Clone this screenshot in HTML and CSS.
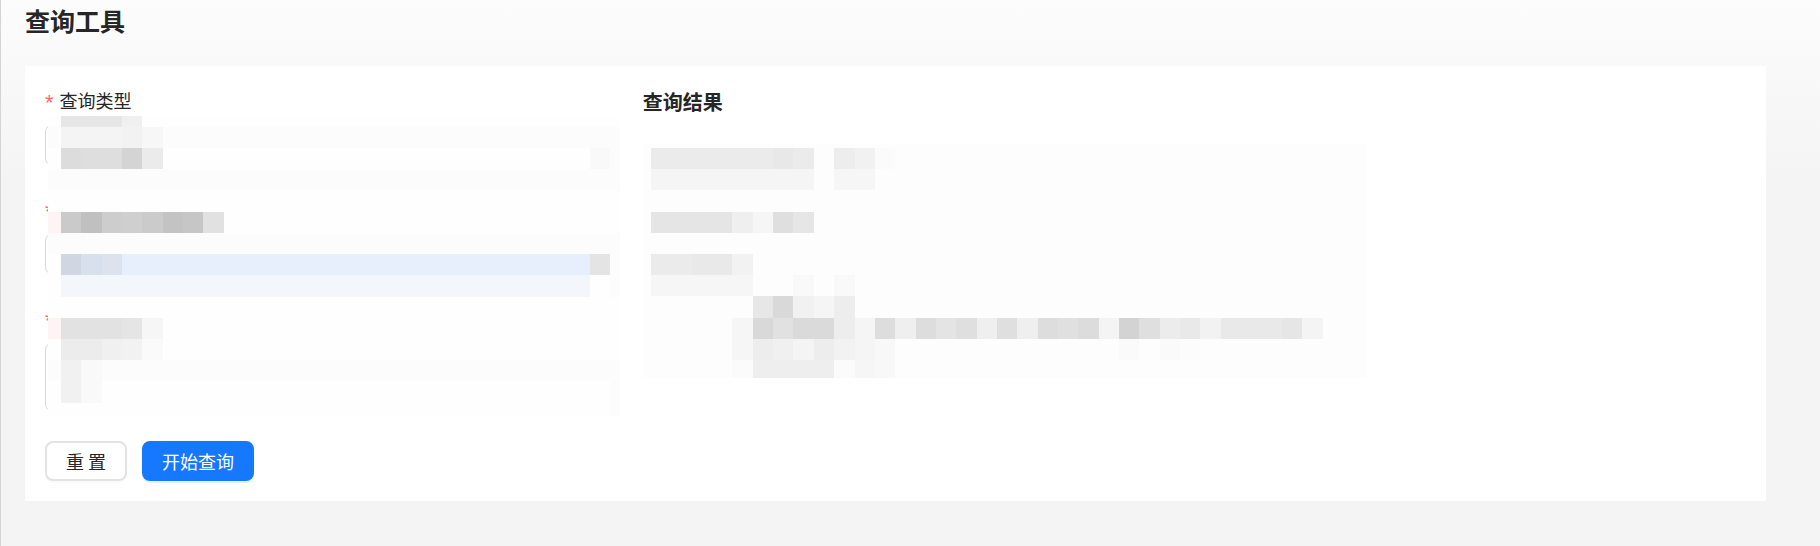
FILE: index.html
```html
<!DOCTYPE html>
<html lang="zh-CN">
<head>
<meta charset="utf-8">
<meta name="viewport" content="width=device-width, initial-scale=1">
<title>查询工具</title>
<link rel="stylesheet" href="styles.css">
</head>
<body>
<main class="page">
  <h1 class="page-title">查询工具</h1>
  <section class="card">
    <form class="query-form">
      <div class="field">
        <label class="label" for="type"><span class="required">*</span>查询类型</label>
        <select class="control" id="type"></select>
      </div>
      <div class="field">
        <label class="label" for="key"><span class="required">*</span></label>
        <input class="control" id="key" type="text">
      </div>
      <div class="field">
        <label class="label" for="content"><span class="required">*</span></label>
        <textarea class="control control-area" id="content"></textarea>
      </div>
      <div class="actions">
        <button class="btn" type="reset">重 置</button>
        <button class="btn btn-primary" type="button">开始查询</button>
      </div>
      <!-- Pixelated cover over the private form values -->
      <svg class="form-mosaic" width="572" height="300" viewBox="0 0 572 300" shape-rendering="crispEdges" aria-hidden="true">
        <rect width="572" height="300" fill="#fefefe"/>
        <g transform="translate(13 11) scale(20.35 21.2)">
          <g fill="#fcfcfc">
            <rect x="-1" y="0" width="29" height="1"/>
            <rect x="-1" y="2" width="29" height="1"/>
            <rect x="-1" y="5" width="29" height="1"/>
            <rect x="-1" y="11" width="29" height="1"/>
            <rect x="27" y="1" width="1" height="1"/>
            <rect x="27" y="6" width="1" height="2"/>
            <rect x="27" y="12" width="1" height="2"/>
          </g>
          <rect x="0" y="-1" width="3" height="1" fill="#e6e6e6"/>
          <rect x="3" y="-1" width="1" height="1" fill="#f0f0f0"/>
          <rect x="0" y="0" width="3" height="1" fill="#f4f4f4"/>
          <rect x="3" y="0" width="1" height="1" fill="#f2f2f2"/>
          <rect x="4" y="0" width="1" height="1" fill="#f7f7f7"/>
          <rect x="0" y="1" width="1" height="1" fill="#dcdcdc"/>
          <rect x="1" y="1" width="2" height="1" fill="#dedede"/>
          <rect x="3" y="1" width="1" height="1" fill="#d4d4d4"/>
          <rect x="4" y="1" width="1" height="1" fill="#ebebeb"/>
          <rect x="26" y="1" width="1" height="1" fill="#f9f9f9"/>
          <rect x="-1" y="4" width="1" height="1" fill="#fff4f4"/>
          <rect x="0" y="4" width="1" height="1" fill="#cacaca"/>
          <rect x="1" y="4" width="1" height="1" fill="#c0c0c0"/>
          <rect x="2" y="4" width="1" height="1" fill="#cdcdcd"/>
          <rect x="3" y="4" width="1" height="1" fill="#cfcfcf"/>
          <rect x="4" y="4" width="1" height="1" fill="#cbcbcb"/>
          <rect x="5" y="4" width="1" height="1" fill="#c3c3c3"/>
          <rect x="6" y="4" width="1" height="1" fill="#c6c6c6"/>
          <rect x="7" y="4" width="1" height="1" fill="#e1e1e1"/>
          <rect x="0" y="6" width="1" height="1" fill="#d1d6e3"/>
          <rect x="1" y="6" width="1" height="1" fill="#d8dfed"/>
          <rect x="2" y="6" width="1" height="1" fill="#dce3ef"/>
          <rect x="3" y="6" width="23" height="1" fill="#e7eefc"/>
          <rect x="26" y="6" width="1" height="1" fill="#e4e4e4"/>
          <rect x="0" y="7" width="26" height="1" fill="#f3f6fb"/>
          <rect x="-1" y="9" width="1" height="1" fill="#fff4f4"/>
          <rect x="0" y="9" width="3" height="1" fill="#e2e2e2"/>
          <rect x="3" y="9" width="1" height="1" fill="#e5e5e5"/>
          <rect x="4" y="9" width="1" height="1" fill="#f6f6f6"/>
          <rect x="0" y="10" width="2" height="1" fill="#ececec"/>
          <rect x="2" y="10" width="1" height="1" fill="#f0f0f0"/>
          <rect x="3" y="10" width="1" height="1" fill="#f2f2f2"/>
          <rect x="4" y="10" width="1" height="1" fill="#fafafa"/>
          <rect x="0" y="11" width="1" height="2" fill="#f1f1f1"/>
          <rect x="1" y="11" width="1" height="2" fill="#f9f9f9"/>
        </g>
      </svg>
    </form>
    <section class="result">
      <h2 class="result-title">查询结果</h2>
      <!-- Pixelated result details -->
      <svg class="result-mosaic" width="723" height="234" viewBox="0 0 723 234" shape-rendering="crispEdges" aria-hidden="true">
        <rect width="723" height="234" fill="#fdfdfd"/>
        <g transform="translate(8 4) scale(20.35 21.2)">
          <rect x="0" y="0" width="8" height="1" fill="#ebebeb"/>
          <rect x="6" y="0" width="1" height="1" fill="#e8e8e8"/>
          <rect x="9" y="0" width="1" height="1" fill="#ededed"/>
          <rect x="10" y="0" width="1" height="1" fill="#f1f1f1"/>
          <rect x="11" y="0" width="1" height="1" fill="#fbfbfb"/>
          <rect x="0" y="1" width="8" height="1" fill="#f5f5f5"/>
          <rect x="9" y="1" width="2" height="1" fill="#f6f6f6"/>
          <rect x="0" y="3" width="4" height="1" fill="#e5e5e5"/>
          <rect x="4" y="3" width="1" height="1" fill="#efefef"/>
          <rect x="5" y="3" width="1" height="1" fill="#f6f6f6"/>
          <rect x="6" y="3" width="1" height="1" fill="#dfdfdf"/>
          <rect x="7" y="3" width="1" height="1" fill="#e6e6e6"/>
          <rect x="0" y="5" width="2" height="1" fill="#ebebeb"/>
          <rect x="2" y="5" width="2" height="1" fill="#e9e9e9"/>
          <rect x="4" y="5" width="1" height="1" fill="#f2f2f2"/>
          <rect x="0" y="6" width="5" height="1" fill="#f6f6f6"/>
          <rect x="7" y="6" width="1" height="1" fill="#f9f9f9"/>
          <rect x="9" y="6" width="1" height="1" fill="#f9f9f9"/>
          <rect x="5" y="7" width="1" height="1" fill="#e7e7e7"/>
          <rect x="6" y="7" width="1" height="1" fill="#d9d9d9"/>
          <rect x="7" y="7" width="1" height="1" fill="#f1f1f1"/>
          <rect x="8" y="7" width="1" height="1" fill="#f5f5f5"/>
          <rect x="9" y="7" width="1" height="1" fill="#ededed"/>
          <rect x="4" y="8" width="1" height="2" fill="#f6f6f6"/>
          <rect x="5" y="8" width="1" height="1" fill="#d9d9d9"/>
          <rect x="6" y="8" width="1" height="1" fill="#e1e1e1"/>
          <rect x="7" y="8" width="2" height="1" fill="#dadada"/>
          <rect x="9" y="8" width="1" height="1" fill="#ededed"/>
          <rect x="10" y="8" width="1" height="1" fill="#f5f5f5"/>
          <rect x="11" y="8" width="1" height="1" fill="#dddddd"/>
          <rect x="12" y="8" width="1" height="1" fill="#efefef"/>
          <rect x="13" y="8" width="1" height="1" fill="#dddddd"/>
          <rect x="14" y="8" width="1" height="1" fill="#e4e4e4"/>
          <rect x="15" y="8" width="1" height="1" fill="#dfdfdf"/>
          <rect x="16" y="8" width="1" height="1" fill="#efefef"/>
          <rect x="17" y="8" width="1" height="1" fill="#dfdfdf"/>
          <rect x="18" y="8" width="1" height="1" fill="#efefef"/>
          <rect x="19" y="8" width="1" height="1" fill="#dddddd"/>
          <rect x="20" y="8" width="1" height="1" fill="#e0e0e0"/>
          <rect x="21" y="8" width="1" height="1" fill="#dcdcdc"/>
          <rect x="22" y="8" width="1" height="1" fill="#f4f4f4"/>
          <rect x="23" y="8" width="1" height="1" fill="#d3d3d3"/>
          <rect x="24" y="8" width="1" height="1" fill="#dfdfdf"/>
          <rect x="25" y="8" width="1" height="1" fill="#ececec"/>
          <rect x="26" y="8" width="1" height="1" fill="#e9e9e9"/>
          <rect x="27" y="8" width="1" height="1" fill="#f2f2f2"/>
          <rect x="28" y="8" width="3" height="1" fill="#e9e9e9"/>
          <rect x="31" y="8" width="1" height="1" fill="#e6e6e6"/>
          <rect x="32" y="8" width="1" height="1" fill="#f4f4f4"/>
          <rect x="5" y="9" width="1" height="1" fill="#ededed"/>
          <rect x="6" y="9" width="1" height="1" fill="#f0f0f0"/>
          <rect x="7" y="9" width="1" height="1" fill="#f4f4f4"/>
          <rect x="8" y="9" width="1" height="1" fill="#ededed"/>
          <rect x="9" y="9" width="1" height="1" fill="#f2f2f2"/>
          <rect x="10" y="9" width="1" height="1" fill="#f5f5f5"/>
          <rect x="11" y="9" width="1" height="2" fill="#f8f8f8"/>
          <rect x="23" y="9" width="1" height="1" fill="#fafafa"/>
          <rect x="25" y="9" width="1" height="1" fill="#fafafa"/>
          <rect x="26" y="9" width="1" height="1" fill="#fcfcfc"/>
          <rect x="4" y="10" width="1" height="1" fill="#fbfbfb"/>
          <rect x="5" y="10" width="4" height="1" fill="#eeeeee"/>
          <rect x="9" y="10" width="1" height="1" fill="#fbfbfb"/>
          <rect x="10" y="10" width="1" height="1" fill="#f6f6f6"/>
        </g>
      </svg>
    </section>
  </section>
</main>
</body>
</html>
```
FILE: styles.css
```css
* {
  box-sizing: border-box;
}

body {
  margin: 0;
  color: #262626;
  font-family: "Noto Sans CJK SC", sans-serif;
  font-size: 18px;
  background: #f4f4f4;
}

.page {
  min-height: 100vh;
  padding: 2px 54px 40px 24px;
  border-left: 1px solid #d4d4d4;
  background: linear-gradient(#fcfcfc, #f4f4f4 180px);
}

.page-title {
  margin: 0 0 28px;
  font-size: 25px;
  font-weight: 600;
  line-height: 36px;
}

.card {
  display: grid;
  grid-template-columns: minmax(0, 13fr) minmax(0, 25fr);
  gap: 24px;
  padding: 20px;
  background: #fff;
}

.query-form {
  position: relative;
  display: flex;
  flex-direction: column;
  gap: 29px;
}

.field {
  display: flex;
  flex-direction: column;
  gap: 10px;
}

.label {
  display: flex;
  gap: 6px;
  height: 28px;
  line-height: 28px;
}

.required {
  color: #ff6669;
  font-family: "Liberation Sans", sans-serif;
  font-size: 22px;
  line-height: 34px;
}

.control {
  width: 100%;
  height: 42px;
  padding: 4px 12px;
  border: 1px solid #d9d9d9;
  border-radius: 8px;
  background: #fff;
  font: inherit;
  appearance: none;
}

.control-area {
  height: 70px;
  resize: none;
}

.actions {
  display: flex;
  gap: 15px;
}

.btn {
  height: 40px;
  padding: 0 19px;
  border: 2px solid #e3e3e3;
  border-radius: 8px;
  color: #262626;
  background: #fff;
  font: inherit;
  line-height: 34px;
  box-shadow: 0 2px 0 rgba(0, 0, 0, 0.02);
}

.btn-primary {
  padding: 0 18px;
  border-color: #1677ff;
  color: #fff;
  background: #1677ff;
  box-shadow: 0 2px 0 rgba(5, 145, 255, 0.1);
}

.form-mosaic {
  position: absolute;
  top: 30px;
  left: 3px;
}

.result-title {
  margin: 0 0 26px;
  font-size: 20px;
  font-weight: 600;
  line-height: 32px;
}

.result-mosaic {
  display: block;
  max-width: 100%;
}
```
